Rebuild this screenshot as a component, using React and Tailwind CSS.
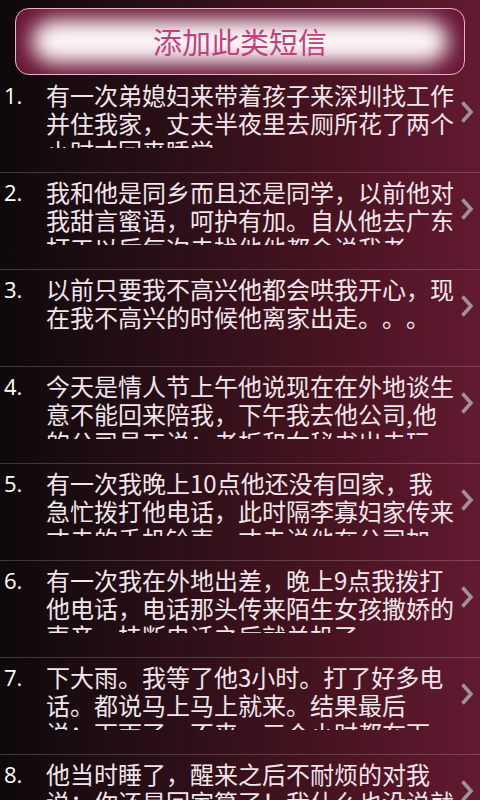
import React from "react";

const rows = [
  ["有一次弟媳妇来带着孩子来深圳找工作", "并住我家，丈夫半夜里去厕所花了两个", "小时才回来睡觉"],
  ["我和他是同乡而且还是同学，以前他对", "我甜言蜜语，呵护有加。自从他去广东", "打工以后每次去找他他都会说我老"],
  ["以前只要我不高兴他都会哄我开心，现", "在我不高兴的时候他离家出走。。。"],
  ["今天是情人节上午他说现在在外地谈生", "意不能回来陪我，下午我去他公司,他", "的公司员工说：老板和女秘书出去玩"],
  ["有一次我晚上10点他还没有回家，我", "急忙拨打他电话，此时隔李寡妇家传来", "丈夫的手机铃声，丈夫说他在公司加"],
  ["有一次我在外地出差，晚上9点我拨打", "他电话，电话那头传来陌生女孩撒娇的", "声音，挂断电话之后就关机了。"],
  ["下大雨。我等了他3小时。打了好多电", "话。都说马上马上就来。结果最后", "说：下雨了，不来。三个小时都在下"],
  ["他当时睡了，醒来之后不耐烦的对我", "说：你还是回家算了！我什么也没说就", "走了"],
];

function Chevron() {
  return (
    <svg width="14" height="24" viewBox="0 0 14 24" fill="none">
      <path d="M2.5 2.5 L11 12 L2.5 21.5" stroke="#a09097" strokeWidth="3.6" strokeLinecap="butt" strokeLinejoin="miter" />
    </svg>
  );
}

export default function App() {
  return (
    <div
      className="w-[480px] h-[800px] overflow-hidden bg-[linear-gradient(to_right,#0e090b_0%,#2a0f18_35%,#45131f_65%,#621a31_100%)] text-[#f2e6ec] [text-spacing-trim:space-all]"
      style={{ fontFamily: '"Noto Sans CJK SC", "Noto Sans", sans-serif' }}
    >
      <div className="pt-[8px] pl-[15px] pr-[15px] pb-[1px]">
        <div className="relative h-[67px] rounded-[14px] border border-[#e6b4c6] bg-[#6a1736] overflow-hidden flex items-center justify-center">
          <div className="absolute left-[16px] right-[16px] top-[11px] bottom-[11px] rounded-full bg-[#fdf6f9] blur-[10px]"></div>
          <span className="relative text-[29px] leading-none text-[#c43e7a]">添加此类短信</span>
        </div>
      </div>
      {rows.map((lines, i) => (
        <div key={i} className="flex border-b border-[#ffffff30] pt-[5px] pb-[24px]">
          <div
            className="w-[46px] pl-[4px] text-[22px] leading-[28px] text-white"
            style={{ fontFamily: '"Open Sans", "Roboto", sans-serif' }}
          >
            {i + 1}.
          </div>
          <div className="w-[414px] h-[67px] overflow-hidden text-[24px] leading-[28px] whitespace-nowrap">
            {lines.map((l, j) => (
              <div key={j}>{l}</div>
            ))}
          </div>
          <div className="h-[62px] flex items-center">
            <Chevron />
          </div>
        </div>
      ))}
    </div>
  );
}
